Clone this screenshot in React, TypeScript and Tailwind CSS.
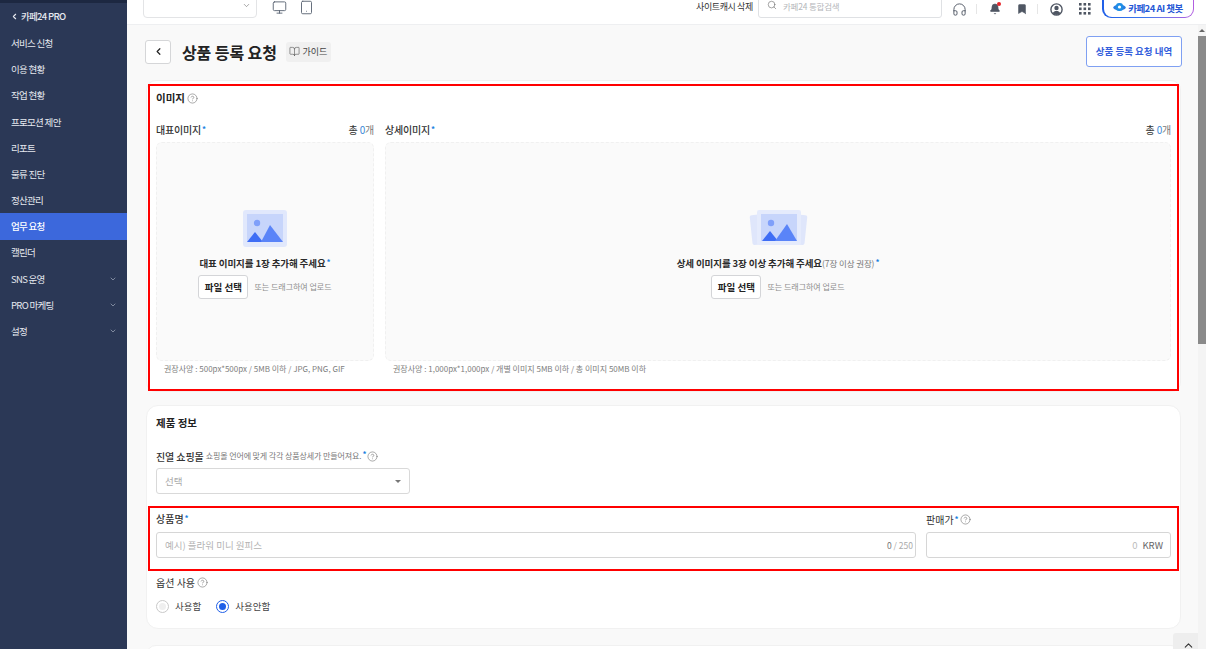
import { Bell, Bookmark, BookOpen, ChevronDown, ChevronLeft, ChevronUp, CircleHelp, Headphones, Monitor, Search, Tablet } from "lucide-react";

const MENU = [
  { label: "서비스 신청" },
  { label: "이용 현황" },
  { label: "작업 현황" },
  { label: "프로모션 제안" },
  { label: "리포트" },
  { label: "물류 진단" },
  { label: "정산관리" },
  { label: "업무 요청", active: true },
  { label: "캘린더" },
  { label: "SNS 운영", more: true },
  { label: "PRO 마케팅", more: true },
  { label: "설정", more: true }
];

function Req() {
  return <span className="relative top-[-2px] ml-px text-[8px] leading-none font-bold text-[#1b7fe0]">*</span>;
}

function Help() {
  return <CircleHelp size={11} strokeWidth={1.2} className="shrink-0 text-[#666]" />;
}

function Sidebar() {
  return (
    <aside className="flex w-[127px] shrink-0 flex-col bg-[#2b3856] text-[9.5px] tracking-[-0.7px] text-[#e6e9ef]">
      <div className="h-[3px] bg-[#1d2841]" />
      <div className="flex h-[27px] items-center pl-[10px]">
        <ChevronLeft size={9} strokeWidth={3} className="mr-[2px]" />
        <span className="font-medium">카페24 PRO</span>
      </div>
      {MENU.map((m) => (
        <div
          key={m.label}
          className={`flex h-[26.2px] items-center justify-between pr-[10px] pl-[11px] ${m.active ? "bg-[#3c68dc] font-medium text-white" : ""}`}
        >
          <span>{m.label}</span>
          {m.more && <ChevronDown size={8} strokeWidth={2} className="text-[#aab2c2]" />}
        </div>
      ))}
    </aside>
  );
}

function GridDots() {
  const dots = [0, 4.5, 9];
  return (
    <svg width="12" height="12" viewBox="0 0 12 12" className="fill-[#4f5663]">
      {dots.map((y) => dots.map((x) => <rect key={`${x}-${y}`} x={x} y={y} width="2.6" height="2.6" />))}
    </svg>
  );
}

function TopBar() {
  return (
    <header className="flex h-[25px] shrink-0 items-end overflow-hidden border-b border-[#eeeff1] bg-white pb-[6px] pl-[16px]">
      <div className="flex h-[30px] w-[114px] items-end justify-end rounded-[4px] border border-[#e3e4e6] pr-[5px] pb-[7px]">
        <ChevronDown size={9} strokeWidth={1.5} className="text-[#666]" />
      </div>
      <Monitor size={15} strokeWidth={1.5} className="mb-[3px] ml-[15px] text-[#5d6675]" />
      <Tablet size={15} strokeWidth={1.5} className="mb-[3px] ml-[12px] text-[#5d6675]" />
      <span className="mb-[5px] ml-[382px] w-[62px] text-[9px] leading-[12px] tracking-[-0.4px] whitespace-nowrap text-[#333]">사이트캐시 삭제</span>
      <div className="flex h-[30px] w-[184px] items-end rounded-[3px] border border-[#dfe1e4] pb-[5px] pl-[8px]">
        <Search size={10} strokeWidth={1.4} className="mb-[2px] text-[#666]" />
        <span className="ml-[6px] text-[8.5px] leading-[12px] tracking-[-0.2px] text-[#b5b7bb]">카페24 통합검색</span>
      </div>
      <Headphones size={15} strokeWidth={1.5} className="mb-[1px] ml-[10px] text-[#4f5663]" />
      <div className="mb-[4px] ml-[9px] h-[10px] w-px bg-[#e6e6e6]" />
      <div className="relative mb-[3px] ml-[12px]">
        <Bell size={12} fill="#4f5663" strokeWidth={1.2} className="text-[#4f5663]" />
        <span className="absolute top-[-1px] right-0 h-[4px] w-[4px] rounded-full bg-[#e5252a]" />
      </div>
      <Bookmark size={12} fill="#4f5663" strokeWidth={1} className="mb-[3px] ml-[15px] text-[#4f5663]" />
      <div className="mb-[4px] ml-[9px] h-[10px] w-px bg-[#e6e6e6]" />
      <svg width="13" height="13" viewBox="0 0 13 13" className="mb-[2px] ml-[12px]">
        <circle cx="6.5" cy="6.5" r="5.6" fill="none" stroke="#4f5663" strokeWidth="1.4" />
        <circle cx="6.5" cy="5" r="2.2" fill="#4f5663" />
        <path d="M2.6 10.4C3.4 8.6 5 8 6.5 8s3.1.6 3.9 2.4L6.5 12z" fill="#4f5663" />
      </svg>
      <span className="mb-[3px] ml-[16px] flex">
        <GridDots />
      </span>
      <div className="ml-[11px] h-[30px] w-[92px] rounded-b-[9px] bg-linear-to-r from-[#1f5fe8] via-[#3f79ee] to-[#b35de0] p-[1.5px]">
        <div className="flex h-full items-end justify-center rounded-b-[8px] bg-white pb-[3px]">
          <svg width="13" height="11" viewBox="0 0 13 11" className="mr-[2px] mb-px">
            <ellipse cx="6.5" cy="5.5" rx="6.2" ry="3" fill="#2a7de1" />
            <rect x="3" y="1" width="7" height="8" rx="3" fill="#1f8fe6" />
            <circle cx="6.5" cy="5" r="1.6" fill="#fff" />
          </svg>
          <span className="text-[9.5px] leading-[12px] font-bold tracking-[-0.5px] text-[#2457d6]">카페24 AI 챗봇</span>
        </div>
      </div>
    </header>
  );
}

function PictureGlyph({ stacked }: { stacked?: boolean }) {
  if (stacked) {
    return (
      <svg width="60" height="38" viewBox="0 0 60 38">
        <rect x="3" y="4" width="44" height="30" rx="2" fill="#dfe6fb" transform="rotate(-6 25 19)" />
        <rect x="14" y="4" width="44" height="30" rx="2" fill="#dfe6fb" transform="rotate(6 36 19)" />
        <rect x="9" y="1" width="44" height="35" rx="2" fill="#e5ebfc" />
        <rect x="13" y="5" width="36" height="27" fill="#c7d5fb" />
        <circle cx="23" cy="14" r="3.2" fill="#7f9ffa" />
        <path d="M14 32l8-10 8 10z" fill="#3e6df5" />
        <path d="M27 32l12-17 10 17z" fill="#5a84f8" />
      </svg>
    );
  }
  return (
    <svg width="44" height="37" viewBox="0 0 44 37">
      <rect width="44" height="37" rx="3" fill="#e1e8fc" />
      <rect x="4" y="4" width="36" height="28" fill="#c7d5fb" />
      <circle cx="14" cy="13" r="3.2" fill="#7f9ffa" />
      <path d="M4 32l8-10 8 10z" fill="#3e6df5" />
      <path d="M18 32l9-17 13 17z" fill="#5a84f8" />
    </svg>
  );
}

function UploadColumn({ title, children, stacked, hint, className }: { title: string; children: React.ReactNode; stacked?: boolean; hint: string; className: string }) {
  return (
    <div className={className}>
      <div className="flex h-[24px] items-center justify-between pb-[2px] text-[10px] tracking-[-0.2px] text-[#333]">
        <span className="font-medium">
          {title}
          <Req />
        </span>
        <span>
          총 <span className="text-[#3c8ad8]">0</span>
          <span className="text-[#777]">개</span>
        </span>
      </div>
      <div className="flex h-[219px] flex-col items-center rounded-[6px] border border-dashed border-[#f0f0f0] bg-[#fafafa] pt-[66px]">
        <div className="flex h-[38px] items-center">
          <PictureGlyph stacked={stacked} />
        </div>
        <p className="mt-[8px] h-[16px] text-[9.5px] leading-[16px] font-semibold tracking-[-0.1px] whitespace-nowrap text-[#2b2b2b]">{children}</p>
        <div className="mt-[4px] flex items-center gap-[6px]">
          <button className="h-[24px] w-[50px] rounded-[3px] border border-[#d4d5d8] bg-white text-[9.5px] font-semibold text-[#222]">파일 선택</button>
          <span className="text-[8px] text-[#8c8c8c]">또는 드래그하여 업로드</span>
        </div>
      </div>
      <p className="mt-[1px] pl-[8px] text-[8px] leading-[14px] text-[#7e7e7e]">{hint}</p>
    </div>
  );
}

function Radio({ label, checked }: { label: string; checked?: boolean }) {
  return (
    <label className="flex items-center gap-[6px] text-[9.5px] text-[#444]">
      <span className={`flex h-[13px] w-[13px] items-center justify-center rounded-full border bg-white ${checked ? "border-[#1f5fe8]" : "border-[#c9c9c9]"}`}>
        <span className={`h-[7px] w-[7px] rounded-full ${checked ? "bg-[#1f5fe8]" : "bg-[#efefef]"}`} />
      </span>
      {label}
    </label>
  );
}

function MainContent() {
  return (
    <div className="relative min-w-0 flex-1 overflow-hidden bg-[#f9f9f9] pt-[11px] pr-[17px] pl-[19px]">
      <div className="-mx-[1px] flex h-[31px] items-center">
        <button className="flex h-[24px] w-[26px] items-center justify-center rounded-[3px] border border-[#d5d6d8] bg-white text-[#222]">
          <ChevronLeft size={11} strokeWidth={2.6} />
        </button>
        <h1 className="ml-[11px] text-[16px] font-bold tracking-[-0.1px] text-[#222]">상품 등록 요청</h1>
        <span className="ml-[9px] flex h-[20px] w-[45px] items-center justify-center gap-[2px] rounded-[3px] bg-[#f0f0f0] text-[9px] text-[#444]">
          <BookOpen size={11} strokeWidth={1.2} />
          가이드
        </span>
        <button className="ml-auto h-[31px] w-[96px] rounded-[3px] border-[1.5px] border-[#7fa0f2] bg-white text-[9.5px] font-semibold text-[#3560dc]">상품 등록 요청 내역</button>
      </div>

      <section className="mt-[13px] h-[312px] rounded-[10px] border border-[#f1f1f1] bg-white px-[9px] pt-[9px]">
        <div className="flex h-[16px] items-center gap-[2px] text-[10.5px] font-bold text-[#222]">
          이미지
          <Help />
        </div>
        <div className="mt-[12px] flex gap-[11px]">
          <UploadColumn className="w-[218px] shrink-0" title="대표이미지" hint="권장사양 : 500px*500px / 5MB 이하 / JPG, PNG, GIF">
            대표 이미지를 1장 추가해 주세요
            <Req />
          </UploadColumn>
          <UploadColumn className="min-w-0 flex-1" stacked title="상세이미지" hint="권장사양 : 1,000px*1,000px / 개별 이미지 5MB 이하 / 총 이미지 50MB 이하">
            상세 이미지를 3장 이상 추가해 주세요
            <span className="text-[8.5px] font-normal text-[#777]">(7장 이상 권장)</span>
            <Req />
          </UploadColumn>
        </div>
      </section>

      <section className="mt-[13px] h-[224px] rounded-[12px] border border-[#f1f1f1] bg-white px-[9px] pt-[9px]">
        <h2 className="h-[16px] text-[10.5px] leading-[16px] font-bold text-[#222]">제품 정보</h2>
        <div className="mt-[18px] flex h-[14px] items-center text-[10px] tracking-[-0.1px] text-[#333]">
          <span className="font-medium">진열 쇼핑몰</span>
          <span className="ml-[2px] text-[8px] text-[#777]">쇼핑몰 언어에 맞게 각각 상품상세가 만들어져요.</span>
          <Req />
          <span className="ml-[1px]">
            <Help />
          </span>
        </div>
        <div className="mt-[5px] flex h-[26px] w-[254px] items-center justify-between rounded-[3px] border border-[#d9d9d9] px-[8px] text-[9.5px] text-[#aaa]">
          선택
          <span className="h-0 w-0 border-x-[3px] border-t-[3px] border-x-transparent border-t-[#777]" />
        </div>
        <div className="mt-[18px] flex gap-[10px]">
          <div className="min-w-0 flex-1">
            <div className="h-[14px] text-[10px] leading-[14px] font-medium text-[#333]">
              상품명
              <Req />
            </div>
            <div className="mt-[6px] flex h-[26px] items-center justify-between rounded-[3px] border border-[#d6d6d6] pr-[2px] pl-[8px] text-[9.5px] text-[#b3b3b3]">
              예시) 플라워 미니 원피스
              <span className="text-[8.5px] text-[#aaa]">
                <span className="text-[#777]">0</span> / 250
              </span>
            </div>
          </div>
          <div className="w-[245px] shrink-0">
            <div className="flex h-[14px] items-center gap-[1px] text-[10px] text-[#333]">
              <span>
                판매가
                <Req />
              </span>
              <Help />
            </div>
            <div className="mt-[6px] flex h-[26px] items-center justify-end rounded-[3px] border border-[#d6d6d6] px-[7px] text-[9.5px]">
              <span className="mr-[5px] text-[#bbb]">0</span>
              <span className="text-[#666]">KRW</span>
            </div>
          </div>
        </div>
        <div className="mt-[17px] flex h-[14px] items-center gap-[2px] text-[10px] text-[#333]">
          옵션 사용
          <Help />
        </div>
        <div className="mt-[10px] flex gap-[15px]">
          <Radio label="사용함" />
          <Radio label="사용안함" checked />
        </div>
      </section>

      <section className="mt-[16px] h-[40px] rounded-[10px] border border-[#f1f1f1] bg-white" />

      <div className="pointer-events-none absolute top-[59px] right-[19px] left-[21px] h-[307px] border-2 border-[#ff0000]" />
      <div className="pointer-events-none absolute top-[481px] right-[19px] left-[21px] h-[65px] border-2 border-[#ff0000]" />
      <button className="absolute right-[-5px] bottom-0 flex h-[16px] w-[30px] items-start justify-center rounded-t-[3px] bg-[#eeeeee] pt-[6px] text-[#333]">
        <ChevronUp size={13} strokeWidth={2} />
      </button>
    </div>
  );
}

function ScrollBar() {
  return (
    <div className="flex w-[8px] shrink-0 flex-col items-center bg-[#f4f4f4]">
      <span className="mt-[4px] mb-[4px] h-0 w-0 border-x-[3px] border-b-[3px] border-x-transparent border-b-[#666]" />
      <div className="h-[308px] w-full bg-[#8a8a8a]" />
    </div>
  );
}

export default function App() {
  return (
    <div className="flex h-[649px] w-[1206px] overflow-hidden bg-white font-['Noto_Sans_CJK_KR','Noto_Sans',sans-serif]">
      <Sidebar />
      <div className="flex min-w-0 flex-1 flex-col">
        <TopBar />
        <div className="flex min-h-0 flex-1">
          <MainContent />
          <ScrollBar />
        </div>
      </div>
    </div>
  );
}
